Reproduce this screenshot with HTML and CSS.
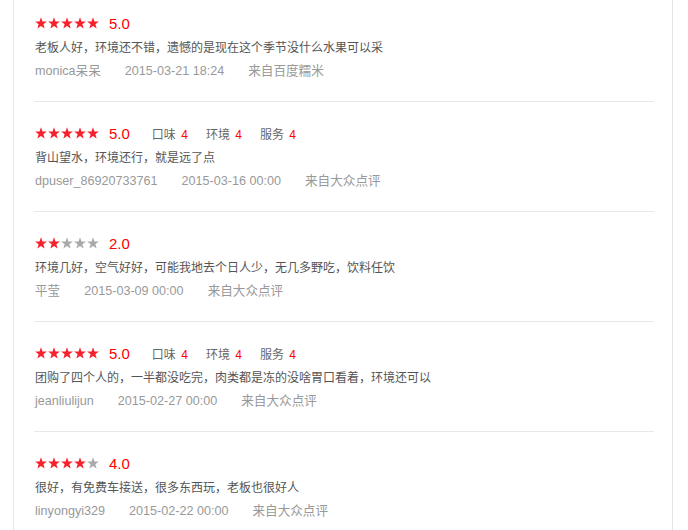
FILE: index.html
```html
<!DOCTYPE html>
<html lang="zh-CN">
<head>
  <meta charset="UTF-8">
  <title>评价</title>
  <link rel="stylesheet" href="styles.css">
</head>
<body>
  <svg class="defs" width="0" height="0">
    <symbol id="star" viewBox="0 0 12 12">
      <polygon points="6,0.3 7.47,4.48 11.9,4.58 8.38,7.27 9.64,11.52 6,9 2.36,11.52 3.62,7.27 0.1,4.58 4.53,4.48"/>
    </symbol>
  </svg>

  <div class="panel">
    <ul class="reviews">
      <li class="review">
        <div class="rate">
          <span class="stars">
            <svg class="on"><use href="#star"/></svg><svg class="on"><use href="#star"/></svg><svg class="on"><use href="#star"/></svg><svg class="on"><use href="#star"/></svg><svg class="on"><use href="#star"/></svg>
          </span>
          <span class="score">5.0</span>
        </div>
        <p class="text">老板人好，环境还不错，遗憾的是现在这个季节没什么水果可以采</p>
        <div class="meta"><span>monica呆呆</span><span>2015-03-21 18:24</span><span>来自百度糯米</span></div>
      </li>

      <li class="review">
        <div class="rate">
          <span class="stars">
            <svg class="on"><use href="#star"/></svg><svg class="on"><use href="#star"/></svg><svg class="on"><use href="#star"/></svg><svg class="on"><use href="#star"/></svg><svg class="on"><use href="#star"/></svg>
          </span>
          <span class="score">5.0</span>
          <span class="sub">口味 <em>4</em></span>
          <span class="sub">环境 <em>4</em></span>
          <span class="sub">服务 <em>4</em></span>
        </div>
        <p class="text">背山望水，环境还行，就是远了点</p>
        <div class="meta"><span>dpuser_86920733761</span><span>2015-03-16 00:00</span><span>来自大众点评</span></div>
      </li>

      <li class="review">
        <div class="rate">
          <span class="stars">
            <svg class="on"><use href="#star"/></svg><svg class="on"><use href="#star"/></svg><svg><use href="#star"/></svg><svg><use href="#star"/></svg><svg><use href="#star"/></svg>
          </span>
          <span class="score">2.0</span>
        </div>
        <p class="text">环境几好，空气好好，可能我地去个日人少，无几多野吃，饮料任饮</p>
        <div class="meta"><span>平莹</span><span>2015-03-09 00:00</span><span>来自大众点评</span></div>
      </li>

      <li class="review">
        <div class="rate">
          <span class="stars">
            <svg class="on"><use href="#star"/></svg><svg class="on"><use href="#star"/></svg><svg class="on"><use href="#star"/></svg><svg class="on"><use href="#star"/></svg><svg class="on"><use href="#star"/></svg>
          </span>
          <span class="score">5.0</span>
          <span class="sub">口味 <em>4</em></span>
          <span class="sub">环境 <em>4</em></span>
          <span class="sub">服务 <em>4</em></span>
        </div>
        <p class="text">团购了四个人的，一半都没吃完，肉类都是冻的没啥胃口看着，环境还可以</p>
        <div class="meta"><span>jeanliulijun</span><span>2015-02-27 00:00</span><span>来自大众点评</span></div>
      </li>

      <li class="review">
        <div class="rate">
          <span class="stars">
            <svg class="on"><use href="#star"/></svg><svg class="on"><use href="#star"/></svg><svg class="on"><use href="#star"/></svg><svg class="on"><use href="#star"/></svg><svg><use href="#star"/></svg>
          </span>
          <span class="score">4.0</span>
        </div>
        <p class="text">很好，有免费车接送，很多东西玩，老板也很好人</p>
        <div class="meta"><span>linyongyi329</span><span>2015-02-22 00:00</span><span>来自大众点评</span></div>
      </li>
    </ul>
  </div>
</body>
</html>
```

FILE: styles.css
```css
body {
  margin: 0;
  background: #fff;
  font-family: "Liberation Sans", "Noto Sans CJK SC", sans-serif;
  font-size: 12px;
  color: #333;
  overflow: hidden;
}
.defs {
  position: absolute;
}
.panel {
  width: 658px;
  margin-left: 13px;
  height: 530px;
  border-left: 1px solid #e6e6e6;
  border-right: 1px solid #e6e6e6;
}
.reviews {
  list-style: none;
  margin: 0 18px 0 20px;
  padding: 0;
}
.review {
  padding: 20px 0 19px 1px;
  border-bottom: 1px solid #e8e8e8;
}
.review:first-child {
  padding-top: 12px;
}
.rate {
  display: flex;
  align-items: center;
  height: 22px;
}
.stars {
  display: flex;
  gap: 1px;
}
.stars svg {
  width: 12px;
  height: 12px;
  fill: #aaa;
}
.stars svg.on {
  fill: #f5222d;
}
.score {
  margin-left: 10px;
  margin-right: 13px;
  font-size: 15px;
  color: #f00;
}
.sub {
  margin-left: 9px;
  margin-right: 9px;
  color: #666;
  font-size: 12px;
}
.sub em {
  font-style: normal;
  color: #f00;
  margin-left: 2px;
}
.text {
  margin: 2px 0 0;
  line-height: 24px;
  color: #555;
}
.meta {
  display: flex;
  gap: 24px;
  line-height: 22px;
  color: #999;
  font-size: 12.6px;
}
```
